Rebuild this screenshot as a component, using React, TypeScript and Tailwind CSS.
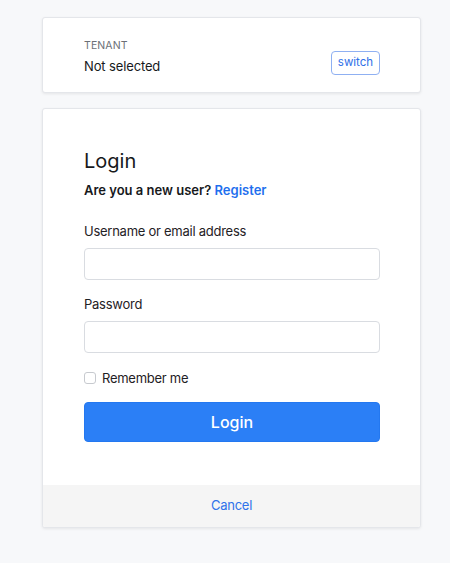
export default function App() {
  return (
    <div
      className="min-h-[563px] bg-[#f7f8fa] pt-[17px] pb-8"
      style={{ fontFamily: 'Inter, "Noto Sans", sans-serif' }}
    >
      {/* Tenant card */}
      <div className="ml-[42px] w-[379px] h-[76px] bg-white border border-[#e4e6ea] rounded-[3px] shadow-[0_1px_3px_rgba(0,0,0,0.08)] flex items-start justify-between pl-[41px] pr-[40px] pt-[20px]">
        <div className="flex flex-col">
          <span className="text-[10.5px] leading-4 text-[#6b6f76] tracking-[0.01em]">TENANT</span>
          <span className="text-[13px] leading-5 mt-[2px] text-[#17191c] tracking-[-0.01em]">Not selected</span>
        </div>
        <button className="h-6 w-[49px] mt-[13px] rounded-[4px] border border-[#8fb0f2] text-[11.5px] text-[#2f6fe8] leading-none">
          switch
        </button>
      </div>

      {/* Login card */}
      <div className="ml-[42px] mt-[15px] w-[379px] bg-white border border-[#e4e6ea] rounded-[3px] shadow-[0_1px_3px_rgba(0,0,0,0.08)] overflow-hidden">
        <div className="pl-[41px] pr-[40px] pt-[38px] pb-[43px] flex flex-col">
          <h1 className="text-[20px] leading-7 text-[#17191c] font-normal">Login</h1>
          <p className="mt-[5px] text-[13px] leading-5 font-semibold text-[#17191c]">
            Are you a new user? <a className="text-[#1f6fee]">Register</a>
          </p>

          <label className="mt-[21px] text-[13px] leading-5 text-[#1f2125] tracking-[-0.02em]">Username or email address</label>
          <input className="mt-[7px] h-8 w-full rounded-[4px] border border-[#d9dce1] bg-white px-2 text-sm outline-none" />

          <label className="mt-[14px] text-[13px] leading-5 text-[#1f2125] tracking-[-0.02em]">Password</label>
          <input type="password" className="mt-[7px] h-8 w-full rounded-[4px] border border-[#d9dce1] bg-white px-2 text-sm outline-none" />

          <div className="mt-[15px] flex items-center gap-[6px] h-5">
            <span className="w-3 h-3 rounded-[3px] border border-[#c7cacf] bg-white" />
            <span className="text-[13px] leading-5 text-[#1f2125] tracking-[-0.02em]">Remember me</span>
          </div>

          <button className="mt-[14px] h-10 w-full rounded-[4px] bg-[#2b7ff6] border border-[#2478f0] text-white text-[16px] font-medium">
            Login
          </button>
        </div>
        <div className="h-[42px] bg-[#f5f5f5] flex items-center justify-center">
          <a className="text-[13px] text-[#2f72ea] tracking-[-0.02em]">Cancel</a>
        </div>
      </div>
    </div>
  );
}
